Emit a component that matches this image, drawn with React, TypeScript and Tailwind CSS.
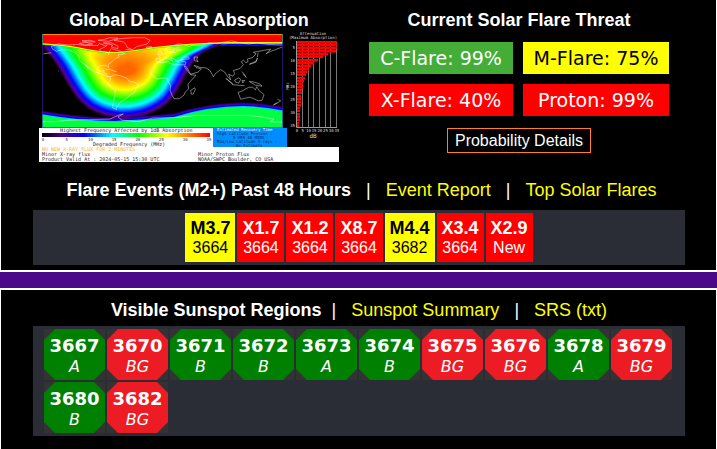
import type { ReactNode } from "react";
import clsx from "clsx";

type Point = [number, number];

const threats = [
  { label: "C-Flare", value: "99%", tone: "bg-[#43ad37] text-white" },
  { label: "M-Flare", value: "75%", tone: "bg-[#ffff00] text-black" },
  { label: "X-Flare", value: "40%", tone: "bg-[#ff0000] text-white" },
  { label: "Proton", value: "99%", tone: "bg-[#ff0000] text-white" },
];

const flares = [
  { size: "M3.7", region: "3664" },
  { size: "X1.7", region: "3664" },
  { size: "X1.2", region: "3664" },
  { size: "X8.7", region: "3664" },
  { size: "M4.4", region: "3682" },
  { size: "X3.4", region: "3664" },
  { size: "X2.9", region: "New" },
];

const sunspots = [
  { region: "3667", type: "A" },
  { region: "3670", type: "BG" },
  { region: "3671", type: "B" },
  { region: "3672", type: "B" },
  { region: "3673", type: "A" },
  { region: "3674", type: "B" },
  { region: "3675", type: "BG" },
  { region: "3676", type: "BG" },
  { region: "3678", type: "A" },
  { region: "3679", type: "BG" },
  { region: "3680", type: "B" },
  { region: "3682", type: "BG" },
];

// Coastlines as [longitude, latitude]
const coasts: Point[][] = [
  [[-166, 66], [-156, 71], [-140, 69], [-128, 70], [-114, 68], [-108, 68], [-96, 68], [-94, 72], [-86, 68], [-82, 69], [-86, 65], [-94, 60], [-92, 57], [-82, 55], [-80, 51], [-78, 58], [-76, 62], [-68, 59], [-62, 57], [-56, 52], [-66, 50], [-64, 46], [-70, 43], [-76, 36], [-81, 31], [-80, 25], [-84, 30], [-94, 29], [-97, 22], [-91, 18], [-87, 21], [-88, 16], [-83, 14], [-82, 9], [-77, 8]],
  [[-166, 66], [-164, 61], [-158, 57], [-150, 60], [-140, 60], [-130, 54], [-124, 48], [-124, 40], [-118, 34], [-112, 26], [-110, 23], [-114, 31], [-106, 22], [-100, 17], [-93, 15], [-86, 11], [-82, 8], [-77, 8]],
  [[-77, 8], [-72, 12], [-62, 10], [-52, 5], [-50, 0], [-40, -3], [-35, -7], [-39, -14], [-41, -22], [-48, -27], [-54, -34], [-58, -37], [-63, -41], [-66, -47], [-69, -52], [-68, -55], [-74, -51], [-73, -42], [-71, -30], [-70, -18], [-77, -12], [-81, -5], [-78, 2], [-77, 8]],
  [[-84, 22], [-78, 22], [-72, 19], [-68, 18]],
  [[-55, 60], [-44, 60], [-38, 66], [-22, 71], [-18, 78], [-26, 83], [-44, 83], [-64, 81], [-72, 78], [-58, 75], [-54, 70], [-52, 64], [-44, 60]],
  [[-124, 72], [-114, 74], [-104, 71], [-116, 69], [-124, 72]],
  [[-88, 73], [-76, 73], [-66, 67], [-66, 62], [-76, 65], [-74, 69], [-88, 73]],
  [[-96, 78], [-86, 80], [-78, 83], [-66, 82], [-80, 76], [-96, 78]],
  [[-120, 77], [-108, 78], [-100, 75], [-112, 75], [-120, 77]],
  [[-24, 65], [-16, 66], [-15, 64], [-22, 63], [-24, 65]],
  [[-6, 36], [-9, 38], [-9, 43], [-2, 44], [-4, 48], [4, 52], [8, 54], [9, 57], [12, 54], [20, 55], [24, 59], [30, 60], [22, 61], [25, 65], [18, 62], [18, 58], [12, 56], [8, 58], [5, 61], [14, 67], [24, 71], [32, 70], [41, 66], [44, 68], [60, 69], [70, 73], [82, 72], [104, 77], [114, 74], [130, 71], [142, 73], [160, 70], [180, 69]],
  [[-6, 36], [0, 39], [4, 43], [9, 44], [12, 41], [16, 38], [13, 45], [19, 42], [23, 37], [26, 40], [36, 36], [35, 31], [32, 31], [20, 31], [11, 34], [10, 37], [-2, 35], [-6, 36]],
  [[28, 41], [32, 46], [40, 46], [41, 42], [34, 42], [28, 41]],
  [[-6, 50], [-5, 55], [-3, 59], [0, 53], [-6, 50]],
  [[-6, 36], [-10, 31], [-17, 21], [-17, 14], [-12, 8], [-8, 4], [4, 6], [9, 4], [9, -1], [13, -8], [12, -17], [15, -27], [18, -34], [26, -34], [33, -27], [35, -21], [40, -15], [39, -6], [43, 0], [51, 11], [43, 12], [37, 21], [33, 29], [36, 28], [43, 13], [54, 17], [59, 23], [51, 26], [48, 30], [57, 26], [66, 25], [72, 20], [77, 8], [80, 14], [88, 22], [94, 17], [98, 9], [103, 2], [100, 13], [106, 9], [109, 14], [107, 20], [117, 24], [122, 31], [119, 37], [122, 40], [126, 35], [129, 37], [128, 42], [136, 45], [141, 52], [137, 55], [154, 59], [163, 61], [156, 52], [163, 57], [170, 60], [180, 65]],
  [[44, -25], [43, -18], [49, -13], [50, -16], [47, -25], [44, -25]],
  [[48, 46], [54, 46], [52, 42], [54, 37], [49, 39], [48, 46]],
  [[131, 32], [136, 35], [141, 38], [143, 44], [141, 36], [131, 32]],
  [[96, 5], [104, -3], [106, -6], [98, 2], [96, 5]],
  [[109, 2], [115, 6], [118, 3], [115, -4], [110, -2], [109, 2]],
  [[105, -7], [114, -8], [124, -9]],
  [[120, 18], [124, 12], [126, 7], [121, 14]],
  [[120, 1], [124, 1], [121, -4], [120, 1]],
  [[131, -1], [138, -2], [147, -6], [150, -10], [140, -8], [131, -1]],
  [[114, -22], [122, -18], [130, -12], [136, -12], [140, -17], [142, -11], [146, -19], [153, -26], [150, -37], [144, -38], [138, -34], [131, -31], [118, -35], [114, -22]],
  [[173, -35], [178, -38], [172, -43], [167, -46], [173, -41]],
  [[144, 54], [143, 46]],
  [[-180, -78], [-160, -78], [-140, -75], [-110, -74], [-78, -73], [-64, -65], [-58, -63], [-66, -69], [-60, -75], [-36, -78], [-14, -71], [20, -70], [52, -66], [90, -66], [130, -66], [150, -69], [168, -73], [162, -78], [180, -79]],
  [[-156, 20], [-155, 19]],
  [[-178, 52], [-166, 54]],
];

// Outline of the absorbed area and of its hottest core, point for point
const outer: Point[] = [
  [-14, -10], [3, 16], [15, 30], [24, 47], [33, 62], [43, 74], [56, 82], [73, 87], [89, 88], [107, 85],
  [124, 77], [134, 68], [142, 55], [149, 42], [156, 29], [166, 19], [186, 11], [215, -5], [170, -40], [87, -55], [10, -40],
];
const core: Point[] = [
  [80, 36], [79, 37], [78, 38], [78, 39], [79, 40], [80, 41], [82, 42], [84, 43], [87, 43], [91, 42],
  [93, 41], [95, 40], [96, 39], [96, 38], [96, 37], [95, 36], [93, 35], [92, 34], [90, 33], [87, 33], [83, 34],
];

const spectrum: [number, number, number, number][] = [
  [0, 0, 0, 0],
  [0.06, 90, 0, 140],
  [0.14, 0, 0, 255],
  [0.28, 0, 255, 255],
  [0.44, 0, 255, 0],
  [0.66, 255, 255, 0],
  [0.84, 255, 160, 0],
  [1, 255, 100, 0],
];

function colorAt(t: number) {
  const i = Math.max(1, spectrum.findIndex((stop) => stop[0] >= t));
  const a = spectrum[i - 1];
  const b = spectrum[i];
  const k = (t - a[0]) / (b[0] - a[0]);
  const [r, g, bl] = [1, 2, 3].map((c) => Math.round(a[c] + (b[c] - a[c]) * k));
  return `rgb(${r},${g},${bl})`;
}

function contour(t: number) {
  const pts = outer.map(([x, y], i) => [x + (core[i][0] - x) * t, y + (core[i][1] - y) * t]);
  const n = pts.length;
  let d = "";
  pts.forEach(([x, y], i) => {
    const [nx, ny] = pts[(i + 1) % n];
    const mid = `${(x + nx) / 2} ${(y + ny) / 2}`;
    d += i === 0 ? `M${mid}` : `Q${x} ${y} ${mid}`;
  });
  return `${d}Q${pts[0][0]} ${pts[0][1]} ${(pts[0][0] + pts[1][0]) / 2} ${(pts[0][1] + pts[1][1]) / 2}Z`;
}

const levels = Array.from({ length: 60 }, (_, i) => i / 59);

const coastPath = coasts
  .map((line) => "M" + line.map(([lon, lat]) => `${123 + lon * 0.667} ${49 - lat * 0.522}`).join("L"))
  .join("");

const northPath = "M-4 0V11Q20 12 38 15Q60 20 78 20Q92 19 115 15Q150 11 190 10L250 10V0Z";
const southPath = "M-4 82Q40 90 76 90Q105 89 135 86Q170 75 204 75Q225 75 250 81V102H-4Z";

const bars = [41, 41, 41, 40, 32, 27, 22, 18, 15, 13, 11, 10, 9, 8, 7, 7, 6, 6, 5, 5, 5, 5, 4, 4, 4, 4, 4, 3, 3];

function AbsorptionMap() {
  return (
    <svg
      viewBox="0 0 300 130"
      className="h-[130px] w-[300px]"
      role="img"
      aria-label="Global D-layer absorption map"
      fontFamily='"DejaVu Sans Mono", monospace'
      fontSize="5"
    >
      <defs>
        <clipPath id="map">
          <rect x="3" y="2" width="241" height="94" />
        </clipPath>
        <linearGradient id="scale">
          <stop offset="0" stopColor="#000" />
          <stop offset="0.12" stopColor="#50008c" />
          <stop offset="0.25" stopColor="#00f" />
          <stop offset="0.42" stopColor="#0ff" />
          <stop offset="0.57" stopColor="#0f0" />
          <stop offset="0.74" stopColor="#ff0" />
          <stop offset="1" stopColor="#f00" />
        </linearGradient>
      </defs>
      <rect width="300" height="130" fill="#000" />
      <g clipPath="url(#map)">
        <g fill="none">
          <path d={northPath} stroke="#3c0078" strokeWidth="8" />
          <path d={northPath} stroke="#00f" strokeWidth="6" />
          <path d={northPath} stroke="#0ff" strokeWidth="4" />
        </g>
        {levels.map((t) => (
          <path key={t} d={contour(t)} fill={colorAt(t)} />
        ))}
        <path d={northPath} fill="none" stroke="#0f0" strokeWidth="3" />
        <path d={northPath} fill="none" stroke="#ff0" strokeWidth="2" />
        <path d={northPath} fill="#f00" />
        <g fill="none">
          <path d={southPath} stroke="#28005a" strokeWidth="9" />
          <path d={southPath} stroke="#5000a0" strokeWidth="7" />
          <path d={southPath} stroke="#00f" strokeWidth="5" />
          <path d={southPath} stroke="#0cf" strokeWidth="2" />
        </g>
        <path d={southPath} fill="#00ff40" />
        <path d={coastPath} fill="none" stroke="#fff" strokeWidth="0.6" strokeOpacity="0.75" />
      </g>
      <path d="M3 2.5H244" stroke="#f80" />
      <path d="M3.5 12V2M243.5 2V12" stroke="#3a8070" />
      <path d="M3.5 12V95.500H243.500V12" fill="none" stroke="#4020b0" strokeOpacity="0.6" />

      <g fill="#ddd" fontSize="4" textAnchor="middle">
        <text x="274" y="3">Attenuation</text>
        <text x="274" y="7">(Maximum Absorption)</text>
      </g>
      <path d="M263.500 9V95M269.500 9V95M274.500 9V95M280.500 9V95M286.500 9V95M291.500 9V95M297.500 9V95" stroke="#777" />
      {bars.map((w, i) => (
        <rect key={i} x="258" y={9 + i * 3} width={w - 1} height={i % 3 === 2 ? 2 : 2.6} fill="#f00" />
      ))}
      <path d="M257.500 9V95.500H298" fill="none" stroke="#999" />
      <g fill="#ddd" fontSize="4" textAnchor="end">
        {[5, 10, 15, 20, 25, 30, 35].map((n, i) => (
          <text key={n} x="256" y={17 + i * 13}>{n}</text>
        ))}
      </g>
      <g fill="#ddd" fontSize="4" textAnchor="middle">
        {[0, 5, 10, 15, 20, 25, 30, 35].map((n, i) => (
          <text key={n} x={258 + i * 5.7} y="100">{n}</text>
        ))}
        <text x="250" y="54" transform="rotate(-90 250 54)">MHz</text>
        <text x="274" y="106" fontSize="6">dB</text>
      </g>

      <path d="M0 96H174V115H300V130H0Z" fill="#fff" />
      <rect x="174" y="96" width="74" height="19" fill="#008cff" />
      <rect x="3" y="101" width="168" height="4" fill="url(#scale)" />
      <g fill="#222">
        <text x="21" y="100">Highest Frequency Affected by 1dB Absorption</text>
        <g fontSize="4" textAnchor="middle">
          {[0, 5, 10, 15, 20, 25, 30, 35].map((n, i) => (
            <text key={n} x={4 + i * 23.7} y="109">{n}</text>
          ))}
        </g>
        <text x="54" y="114">Degraded Frequency (MHz)</text>
        <text x="3" y="119" fill="#ffb030">NO NEW X-RAY FLUX FOR 2 MINUTES</text>
        <text x="3" y="124">Minor X-ray flux</text>
        <text x="3" y="129">Product Valid At : 2024-05-15 15:30 UTC</text>
        <text x="159" y="124">Minor Proton Flux</text>
        <text x="159" y="129">NOAA/SWPC Boulder, CO USA</text>
      </g>
      <g fill="#002a60" fontSize="4">
        <text x="178" y="99" fill="#fff">Estimated Recovery Time</text>
        <text x="178" y="103">High Latitude Protons :</text>
        <text x="194" y="107">5 HRS 48 MINS</text>
        <text x="178" y="111">Mid/Low Latitude X-rays :</text>
        <text x="197" y="115">No Estimate</text>
      </g>
    </svg>
  );
}

function Heading({ children }: { children: ReactNode }) {
  return <h2 className="text-center text-[18px] leading-6 font-bold text-white">{children}</h2>;
}

function Separator() {
  return <span className="text-white">|</span>;
}

function TextLink({ children }: { children: ReactNode }) {
  return (
    <a href="#" className="text-[#ffff00]">
      {children}
    </a>
  );
}

function FlareThreat() {
  return (
    <section className="flex flex-1 flex-col items-center">
      <Heading>Current Solar Flare Threat</Heading>
      <ul className="mt-2.5 grid grid-cols-[144px_146px] gap-2.5 font-['DejaVu_Sans',sans-serif] text-[19px] leading-8">
        {threats.map((threat) => (
          <li key={threat.label} className={clsx("text-center whitespace-nowrap", threat.tone)}>
            {threat.label}: {threat.value}
          </li>
        ))}
      </ul>
      <button type="button" className="mt-3 border border-solid border-[#ff7f27] px-[7px] text-[16px] leading-[23px] text-white">
        Probability Details
      </button>
    </section>
  );
}

function FlareEvents() {
  return (
    <section>
      <div className="text-center text-[18px] leading-6">
        &nbsp;<h2 className="inline font-bold">Flare Events (M2+) Past 48 Hours</h2>
        &nbsp;&nbsp;&nbsp;<Separator />&nbsp;&nbsp;&nbsp;
        <TextLink>Event Report</TextLink>
        &nbsp;&nbsp;&nbsp;<Separator />&nbsp;&nbsp;&nbsp;
        <TextLink>Top Solar Flares</TextLink>
      </div>
      <ul className="mt-2 flex justify-center gap-0.5 bg-[#2b2d36] py-[3px] text-center">
        {flares.map((flare) => (
          <li
            key={flare.size}
            className={clsx(
              "flex flex-col px-[5px] pt-[5px] pb-1 leading-5",
              flare.size.startsWith("M") ? "bg-[#ffff00] text-black" : "bg-[#ff0000] text-white",
            )}
          >
            <strong className="text-[18px]">{flare.size}</strong>
            <span className="text-[16px]">{flare.region}</span>
          </li>
        ))}
      </ul>
    </section>
  );
}

function SunspotRegions() {
  return (
    <section>
      <div className="text-center text-[18px] leading-6">
        <h2 className="inline font-bold">Visible Sunspot Regions</h2>
        &nbsp;&nbsp;<Separator />&nbsp;&nbsp;&nbsp;
        <TextLink>Sunspot Summary</TextLink>
        &nbsp;&nbsp;&nbsp;<Separator />&nbsp;&nbsp;&nbsp;
        <TextLink>SRS (txt)</TextLink>
      </div>
      <ul className="mt-1 flex flex-wrap gap-0.5 bg-[#2b2d36] py-[3px] pr-2 pl-[11px] text-center font-['DejaVu_Sans',sans-serif] text-white">
        {sunspots.map((spot) => (
          <li key={spot.region} className="bg-[#333333]">
            <div
              className={clsx(
                "flex h-[51px] w-[61px] flex-col pt-1.5 leading-[21px] [clip-path:polygon(11px_0,50px_0,100%_11px,100%_40px,50px_100%,11px_100%,0_40px,0_11px)]",
                spot.type === "BG" ? "bg-[#ed1c24]" : "bg-[#008000]",
              )}
            >
              <strong className="text-[18px]">{spot.region}</strong>
              <em className="text-[16px]">{spot.type}</em>
            </div>
          </li>
        ))}
      </ul>
    </section>
  );
}

export default function App() {
  return (
    <main className="flex min-h-screen flex-col gap-4 bg-[#4b0889] font-['Liberation_Sans',Arial,sans-serif] text-white">
      <div className="flex flex-col gap-4 border-x border-b-2 border-white bg-black pt-2 pr-[31px] pb-[5px] pl-8">
        <div className="flex gap-2">
          <section className="flex w-[312px] flex-col items-center">
            <Heading>Global D-LAYER Absorption</Heading>
            <AbsorptionMap />
          </section>
          <FlareThreat />
        </div>
        <FlareEvents />
      </div>
      <div className="flex-1 border-x border-t-2 border-white bg-black pt-2 pr-[31px] pb-3 pl-8">
        <SunspotRegions />
      </div>
    </main>
  );
}
